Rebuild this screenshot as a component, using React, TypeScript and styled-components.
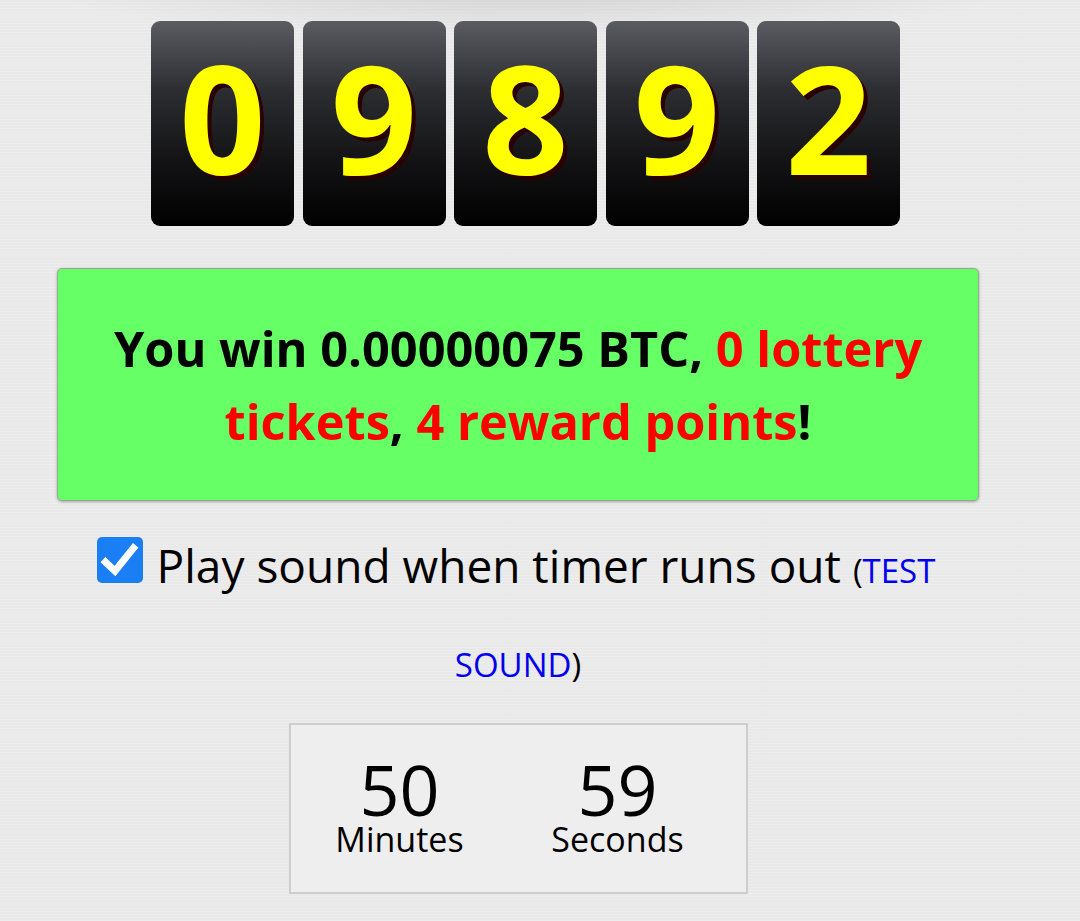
import React from "react";
import styled, { createGlobalStyle } from "styled-components";

const GlobalStyle = createGlobalStyle`
  html, body {
    margin: 0;
    padding: 0;
  }
  body {
    background-color: #e9e9e9;
    background-image:
      radial-gradient(ellipse 480px 40px at 530px -6px, rgba(0,0,0,0.09), rgba(0,0,0,0) 100%),
      repeating-linear-gradient(0deg, rgba(255,255,255,0.18) 0px, rgba(255,255,255,0.18) 1px, rgba(0,0,0,0) 1px, rgba(0,0,0,0) 3px);
    font-family: "Open Sans", "Noto Sans", sans-serif;
    min-height: 921px;
  }
`;

const Page = styled.div`
  width: 922px;
  margin-left: 57px;
  padding-top: 21px;
  display: flex;
  flex-direction: column;
  align-items: stretch;
`;

const DigitRow = styled.div`
  display: flex;
  justify-content: center;
  gap: 8.5px;
  padding-left: 15px;
`;

const DigitBox = styled.div`
  width: 143px;
  height: 205px;
  border-radius: 9px;
  background: linear-gradient(to bottom, #5a5c61 0%, #2b2c30 35%, #121214 70%, #000 100%);
  display: flex;
  align-items: center;
  justify-content: center;
  padding-bottom: 14px;
  box-sizing: border-box;
  color: #ffff00;
  font-family: "Open Sans", "Noto Sans", sans-serif;
  font-weight: 700;
  font-size: 151px;
  line-height: 1;
  text-shadow: 4px 4px 0 #2a0000;
`;

const WinBox = styled.div`
  margin-top: 42px;
  height: 233px;
  box-sizing: border-box;
  background: #66ff66;
  border: 1px solid #9aa59a;
  border-radius: 5px;
  box-shadow: 0 1px 3px rgba(0, 0, 0, 0.3);
  display: flex;
  align-items: center;
  justify-content: center;
  text-align: center;
  padding: 0 40px;
  font-weight: 700;
  font-size: 48.7px;
  line-height: 73px;
  color: #000;
`;

const Red = styled.span`
  color: #ff0000;
`;

const SoundLine = styled.div`
  margin-top: 20px;
  text-align: center;
  font-size: 46px;
  line-height: 89px;
  color: #000;
  padding: 0 40px;
`;

const CheckBox = styled.span`
  display: inline-block;
  width: 46px;
  height: 46px;
  margin-right: 14px;
  margin-left: -4px;
  border-radius: 5px;
  background: #1a7ef4;
  vertical-align: baseline;
  svg {
    display: block;
  }
`;

const Small = styled.span`
  font-size: 33px;
`;

const TestLink = styled.a`
  color: #0000ee;
  text-decoration: none;
  cursor: pointer;
`;

const TimerWrap = styled.div`
  margin-top: 14px;
  display: flex;
  justify-content: center;
`;

const TimerBox = styled.div`
  width: 459px;
  height: 171px;
  box-sizing: border-box;
  border: 2px solid #cdcdcd;
  background: #eeeeee;
  display: flex;
  gap: 20px;
  padding: 29px 29px 0 10px;
`;

const TimerCol = styled.div`
  width: 198px;
  display: flex;
  flex-direction: column;
  align-items: center;
  color: #000;
`;

const TimerValue = styled.div`
  font-size: 70px;
  line-height: 70px;
`;

const TimerLabel = styled.div`
  font-size: 34px;
  line-height: 34px;
  margin-top: -2px;
`;

const digits = ["0", "9", "8", "9", "2"];

export default function App() {
  return (
    <>
      <GlobalStyle />
      <Page>
        <DigitRow>
          {digits.map((d, i) => (
            <DigitBox key={i}>{d}</DigitBox>
          ))}
        </DigitRow>

        <WinBox>
          <div>
            You win 0.00000075 BTC, <Red>0 lottery tickets</Red>,{" "}
            <Red>4 reward points</Red>!
          </div>
        </WinBox>

        <SoundLine>
          <CheckBox>
            <svg width="46" height="46" viewBox="0 0 46 46">
              <path
                d="M8.5 25 L18 34 L36.5 11"
                fill="none"
                stroke="#ffffff"
                strokeWidth="7"
                strokeLinecap="square"
                strokeLinejoin="miter"
              />
            </svg>
          </CheckBox>
          Play sound when timer runs out{" "}
          <Small>
            (<TestLink>TEST SOUND</TestLink>)
          </Small>
        </SoundLine>

        <TimerWrap>
          <TimerBox>
            <TimerCol>
              <TimerValue>50</TimerValue>
              <TimerLabel>Minutes</TimerLabel>
            </TimerCol>
            <TimerCol>
              <TimerValue>59</TimerValue>
              <TimerLabel>Seconds</TimerLabel>
            </TimerCol>
          </TimerBox>
        </TimerWrap>
      </Page>
    </>
  );
}
